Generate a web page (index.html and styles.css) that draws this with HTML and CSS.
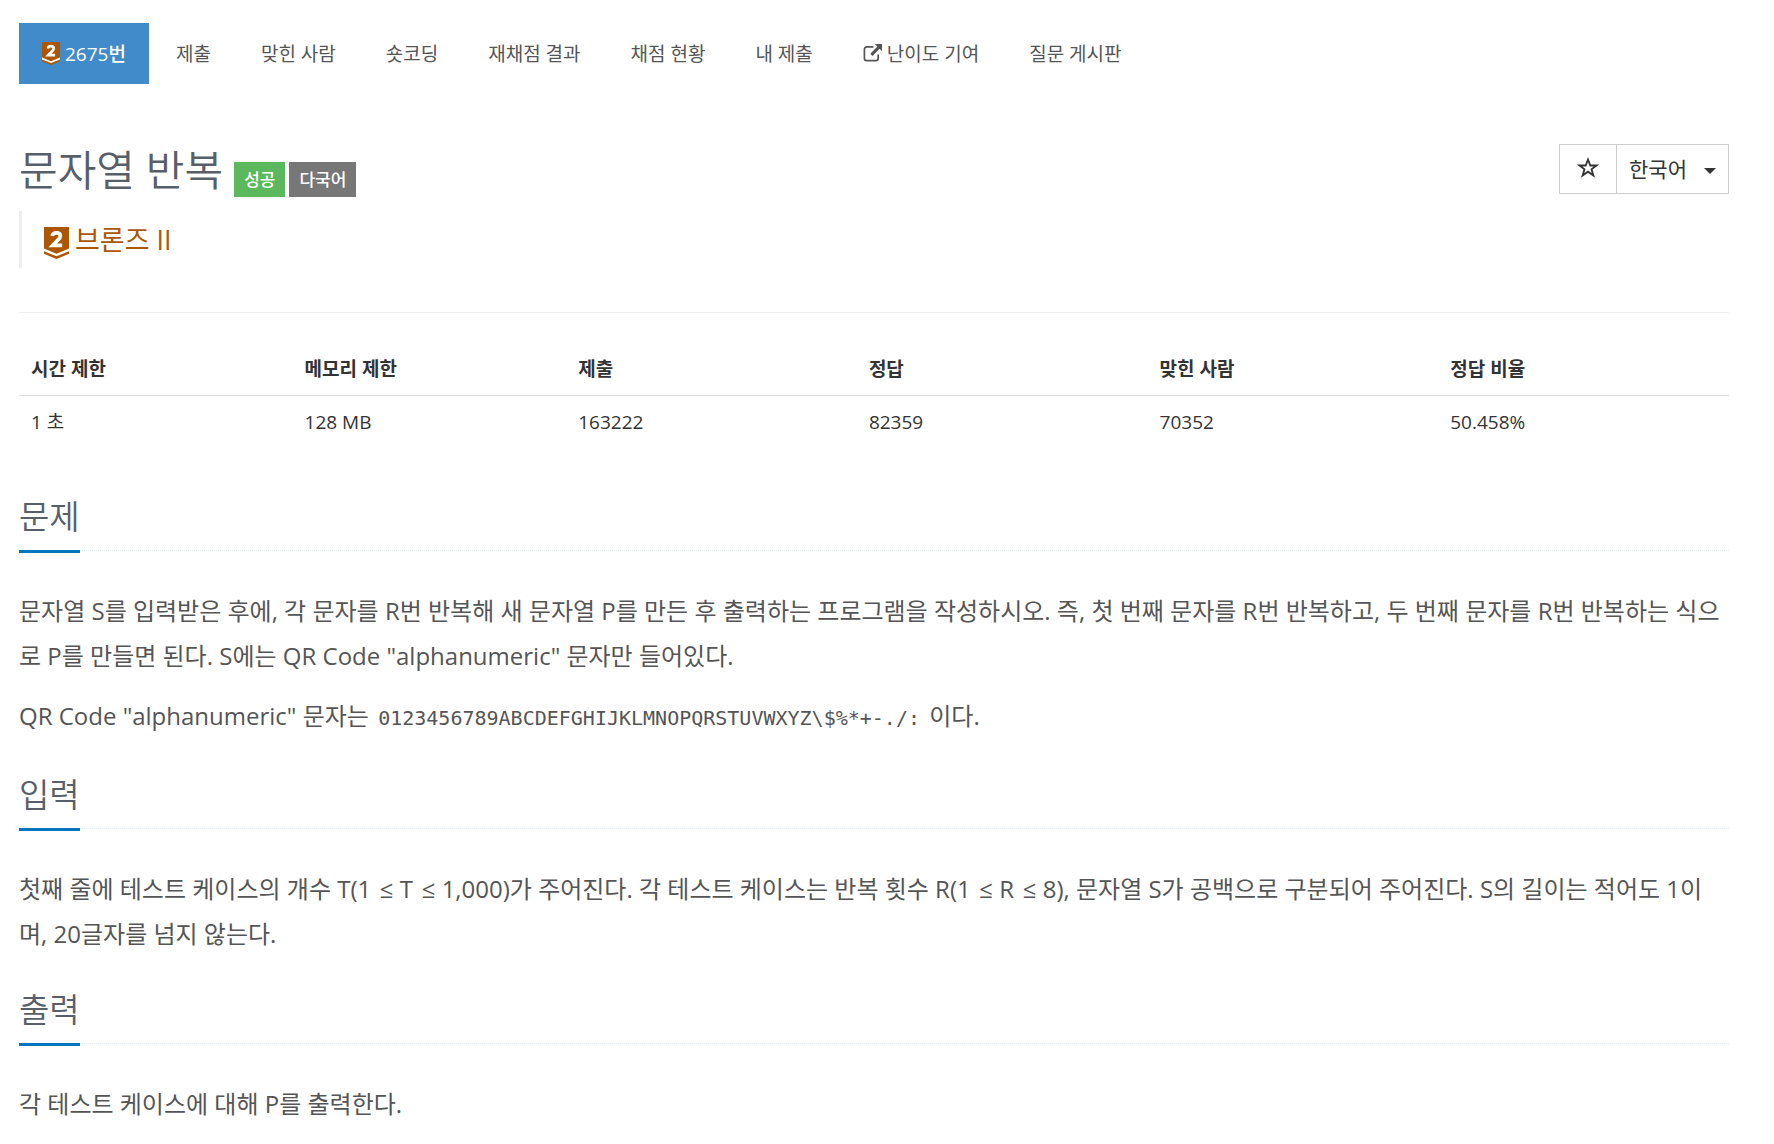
FILE: index.html
```html
<!DOCTYPE html>
<html lang="ko">
<head>
    <meta charset="UTF-8">
    <meta name="viewport" content="width=device-width, initial-scale=1.0">
    <title>2675번: 문자열 반복</title>
    <link rel="stylesheet" href="styles.css">
</head>
<body>

    <!-- Tier badge, used in the menu and under the title -->
    <svg class="sprite" aria-hidden="true">
        <symbol id="tier" viewBox="0 0 25 32">
            <path d="M0 20h25v6L12.500 31 0 26z" fill="#fff"/>
            <path d="M0 0h25v21.500L12.500 26.700 0 21.500z" fill="#ad5600"/>
            <path d="M0 24.300l12.500 5L25 24.300v2.500L12.500 32 0 26.800z" fill="#ad5600"/>
            <path d="M8.200 9c.4-2.200 2-3.200 4.200-3.200 2.500 0 3.900 1.200 3.900 3.100 0 1.600-.9 2.600-2.300 4L8.800 18.300h9.400" fill="none" stroke="#fff" stroke-width="3.700"/>
        </symbol>
    </svg>

    <div class="container">
        <nav>
            <ul class="problem-menu">
                <li class="active"><a href="#"><svg class="tier-small"><use href="#tier"/></svg>2675번</a></li>
                <li><a href="#">제출</a></li>
                <li><a href="#">맞힌 사람</a></li>
                <li><a href="#">숏코딩</a></li>
                <li><a href="#">재채점 결과</a></li>
                <li><a href="#">채점 현황</a></li>
                <li><a href="#">내 제출</a></li>
                <li><a href="#"><svg class="external" viewBox="0 0 20 20"><path d="M11 3H4a2.500 2.500 0 0 0-2.500 2.500v9.500A2.500 2.500 0 0 0 4 17.500h9.500A2.500 2.500 0 0 0 16 15v-4" fill="none" stroke="currentColor" stroke-width="1.800"/><path d="M12.500 0H20v7.500l-2.500-2.500-7.500 7.500-2.300-2.300L15.200 2.700z" fill="currentColor"/></svg>난이도 기여</a></li>
                <li><a href="#">질문 게시판</a></li>
            </ul>
        </nav>

        <header class="page-header">
            <div class="title">
                <h1>문자열 반복</h1>
                <span class="label success">성공</span>
                <span class="label multilang">다국어</span>
            </div>
            <div class="btn-group">
                <button type="button" class="favorite" aria-label="즐겨찾기">
                    <svg viewBox="0 0 22 21"><path d="M11 2.500l2.300 6h6.200l-5 3.800 1.900 6.200-5.400-3.800-5.400 3.800 1.900-6.200-5-3.800h6.200z" fill="none" stroke="currentColor" stroke-width="1.800"/></svg>
                </button>
                <div class="language">
                    <select aria-label="언어">
                        <option>한국어</option>
                    </select>
                    <span class="caret"></span>
                </div>
            </div>
        </header>

        <blockquote class="tier-box">
            <svg class="tier-large"><use href="#tier"/></svg>
            <span>브론즈 II</span>
        </blockquote>

        <hr>

        <table class="problem-info">
            <thead>
                <tr>
                    <th class="limit">시간 제한</th>
                    <th class="limit">메모리 제한</th>
                    <th>제출</th>
                    <th>정답</th>
                    <th>맞힌 사람</th>
                    <th>정답 비율</th>
                </tr>
            </thead>
            <tbody>
                <tr>
                    <td>1 초</td>
                    <td>128 MB</td>
                    <td>163222</td>
                    <td>82359</td>
                    <td>70352</td>
                    <td>50.458%</td>
                </tr>
            </tbody>
        </table>

        <section>
            <div class="headline"><h2>문제</h2></div>
            <p>문자열 S를 입력받은 후에, 각 문자를 R번 반복해 새 문자열 P를 만든 후 출력하는 프로그램을 작성하시오. 즉, 첫 번째 문자를 R번 반복하고, 두 번째 문자를 R번 반복하는 식으로 P를 만들면 된다. S에는 QR Code "alphanumeric" 문자만 들어있다.</p>
            <p>QR Code "alphanumeric" 문자는 <code>0123456789ABCDEFGHIJKLMNOPQRSTUVWXYZ\$%*+-./:</code> 이다.</p>
        </section>

        <section>
            <div class="headline"><h2>입력</h2></div>
            <p>첫째 줄에 테스트 케이스의 개수 T(1 &hairsp;≤ T &hairsp;≤ 1,000)가 주어진다. 각 테스트 케이스는 반복 횟수 R(1 &hairsp;≤ R &hairsp;≤ 8), 문자열 S가 공백으로 구분되어 주어진다. S의 길이는 적어도 1이며, 20글자를 넘지 않는다.</p>
        </section>

        <section>
            <div class="headline"><h2>출력</h2></div>
            <p>각 테스트 케이스에 대해 P를 출력한다.</p>
        </section>
    </div>

</body>
</html>
```
FILE: styles.css
```css
* {
    box-sizing: border-box;
}

body {
    margin: 0;
    background: #fff;
    color: #333;
    font-family: "Open Sans", "Noto Sans CJK KR", sans-serif;
    font-size: 19px;
    line-height: 28px;
}

.sprite {
    display: none;
}

.container {
    padding: 23px 45px 23px 19px;
}

/* Menu */
.problem-menu {
    display: flex;
    gap: 4px;
    margin: 0;
    padding: 0;
    list-style: none;
}

.problem-menu a {
    display: flex;
    align-items: center;
    height: 61px;
    padding: 0 23px;
    color: #555;
    text-decoration: none;
}

.problem-menu .active a {
    background: #428bca;
    color: #fff;
    font-weight: 500;
}

.tier-small {
    width: 18px;
    height: 23px;
    margin-right: 5px;
}

.external {
    width: 19px;
    height: 19px;
    margin-right: 5px;
}

/* Title */
.page-header {
    display: flex;
    justify-content: space-between;
    margin-top: 60px;
}

.title {
    display: flex;
    align-items: flex-start;
    gap: 4px;
}

h1 {
    margin: 0 7px 0 0;
    color: #585f69;
    font-size: 42px;
    font-weight: 350;
    line-height: 52px;
}

.label {
    margin-top: 18px;
    padding: 0 10px;
    color: #fff;
    font-size: 17px;
    font-weight: 500;
    line-height: 35px;
}

.success {
    background: #5cb85c;
}

.multilang {
    background: #777;
}

.btn-group {
    display: flex;
    height: 50px;
    border: 1px solid #ccc;
}

.favorite {
    width: 57px;
    padding: 0;
    border: 0;
    border-right: 1px solid #ccc;
    background: #fff;
    color: #333;
}

.favorite svg {
    width: 22px;
    height: 21px;
}

.language {
    position: relative;
}

.language select {
    width: 111px;
    height: 100%;
    padding: 0 12px;
    border: 0;
    background: #fff;
    color: #333;
    font-family: inherit;
    font-size: 21px;
    appearance: none;
}

.caret {
    position: absolute;
    top: 23px;
    right: 12px;
    border: 6px solid transparent;
    border-top-color: #333;
    border-bottom: 0;
    pointer-events: none;
}

.tier-box {
    display: flex;
    align-items: center;
    gap: 6px;
    height: 57px;
    margin: 14px 0 44px;
    padding-left: 22px;
    border-left: 3px solid #eee;
    color: #ad5600;
    font-size: 27px;
    font-weight: 400;
}

.tier-large {
    width: 25px;
    height: 32px;
    margin-top: 6px;
}

hr {
    margin: 0 0 30px;
    border: 0;
    border-top: 1px solid #eee;
}

/* Limits and statistics */
.problem-info {
    width: 100%;
    margin-bottom: 44px;
    border-collapse: collapse;
    table-layout: fixed;
}

.problem-info th,
.problem-info td {
    padding: 12px;
    text-align: left;
}

.problem-info th {
    width: 17%;
    border-bottom: 1px solid #ddd;
    font-weight: 600;
}

.problem-info .limit {
    width: 16%;
}

/* Problem text */
.headline {
    display: flex;
    margin-bottom: 37px;
    border-bottom: 1px dotted #e4e9f0;
}

h2 {
    margin: 0 0 -3px;
    padding-bottom: 8px;
    border-bottom: 3px solid #0076c0;
    color: #585f69;
    font-size: 33px;
    font-weight: 350;
    line-height: 50px;
}

p {
    margin: 0 0 15px;
    color: #555;
    font-size: 24px;
    line-height: 45px;
}

section {
    margin-bottom: 29px;
}

section p:last-child {
    margin-bottom: 0;
}

code {
    padding: 0 3px;
    font-family: "DejaVu Sans Mono", monospace;
    font-size: 20px;
}
```
